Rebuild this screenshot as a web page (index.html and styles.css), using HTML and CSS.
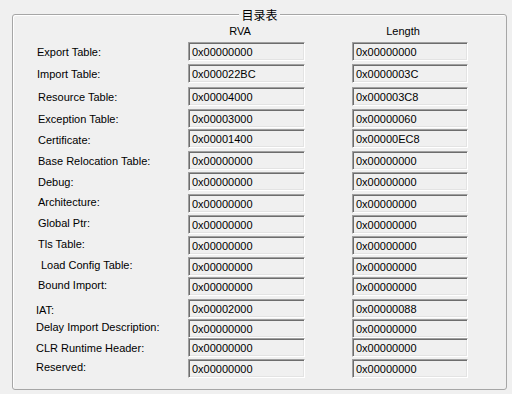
FILE: index.html
```html
<!DOCTYPE html>
<html>
<head>
<meta charset="utf-8">
<link rel="stylesheet" href="styles.css">
</head>
<body>
<div class="group">
  <div class="title"><span>目录表</span></div>
  <div class="head">
    <div></div>
    <div class="h-rva">RVA</div>
    <div class="h-len">Length</div>
  </div>
  <div class="grid">
    <div class="lbl lbl-l">Export Table:</div><div class="box">0x00000000</div><div class="box len">0x00000000</div>
    <div class="lbl lbl-l">Import Table:</div><div class="box">0x000022BC</div><div class="box len">0x0000003C</div>
    <div class="lbl">Resource Table:</div><div class="box">0x00004000</div><div class="box len">0x000003C8</div>
    <div class="lbl">Exception Table:</div><div class="box">0x00003000</div><div class="box len">0x00000060</div>
    <div class="lbl lo">Certificate:</div><div class="box">0x00001400</div><div class="box len">0x00000EC8</div>
    <div class="lbl">Base Relocation Table:</div><div class="box">0x00000000</div><div class="box len">0x00000000</div>
    <div class="lbl">Debug:</div><div class="box">0x00000000</div><div class="box len">0x00000000</div>
    <div class="lbl hi">Architecture:</div><div class="box">0x00000000</div><div class="box len">0x00000000</div>
    <div class="lbl hi">Global Ptr:</div><div class="box">0x00000000</div><div class="box len">0x00000000</div>
    <div class="lbl hi">Tls Table:</div><div class="box">0x00000000</div><div class="box len">0x00000000</div>
    <div class="lbl hi lbl-r">Load Config Table:</div><div class="box">0x00000000</div><div class="box len">0x00000000</div>
    <div class="lbl hi">Bound Import:</div><div class="box">0x00000000</div><div class="box len">0x00000000</div>
    <div class="lbl lo lbl-ll">IAT:</div><div class="box">0x00002000</div><div class="box len">0x00000088</div>
    <div class="lbl hi lbl-ll">Delay Import Description:</div><div class="box">0x00000000</div><div class="box len">0x00000000</div>
    <div class="lbl lbl-ll">CLR Runtime Header:</div><div class="box">0x00000000</div><div class="box len">0x00000000</div>
    <div class="lbl hi lbl-ll">Reserved:</div><div class="box">0x00000000</div><div class="box len">0x00000000</div>
  </div>
</div>
</body>
</html>
```
FILE: styles.css
```css
html, body {
  margin: 0;
  padding: 0;
  background: #f0f0f0;
}
body {
  width: 512px;
  height: 394px;
  overflow: hidden;
  padding-top: 14px;
  box-sizing: border-box;
  font-family: "Liberation Sans", Arial, sans-serif;
  font-size: 11px;
  color: #000;
}
.group {
  margin-left: 12px;
  width: 495px;
  height: 376px;
  box-sizing: border-box;
  border: 1px solid #a6a6a6;
  border-radius: 3px;
  box-shadow: inset 1px 1px 0 #ffffff;
}
.title {
  height: 0;
  display: flex;
  justify-content: center;
}
.title span {
  margin-top: -8px;
  height: 16px;
  line-height: 16px;
  padding: 0 2px;
  background: #f0f0f0;
  font-family: "Noto Sans CJK SC", "Liberation Sans", sans-serif;
  font-size: 12px;
}
.head {
  display: grid;
  grid-template-columns: 175px 117px 47px 116px;
  margin-top: 10px;
  line-height: 13px;
  height: 13px;
}
.h-rva {
  grid-column: 2;
  text-align: center;
  padding-right: 13px;
}
.h-len {
  grid-column: 4;
  text-align: center;
  padding-right: 14px;
}
.grid {
  display: grid;
  margin-top: 4px;
  grid-template-columns: 175px 117px 47px 116px;
  grid-template-rows: 22px 23px 22px 20px 22px 21px 22px 21px 21px 21px 20px 22px 20px 19px 21px 20px;
}
.lbl {
  grid-column: 1;
  align-self: start;
  margin-top: 4px;
  padding-left: 25px;
  line-height: 13px;
  white-space: nowrap;
}
.lbl.hi { margin-top: 2px; }
.lbl.lo { margin-top: 5px; }
.lbl-l { padding-left: 24px; }
.lbl-ll { padding-left: 23px; }
.lbl-r { padding-left: 28px; }
.box {
  grid-column: 2;
  align-self: start;
  height: 19px;
  box-sizing: border-box;
  border: 1px solid;
  border-color: #a0a0a0 #ffffff #ffffff #a0a0a0;
  box-shadow: inset 1px 1px 0 #6d6d6d, inset -1px -1px 0 #e3e3e3;
  padding: 2px 0 0 3px;
  line-height: 15px;
  white-space: nowrap;
  overflow: hidden;
}
.box.len { grid-column: 4; }
```
